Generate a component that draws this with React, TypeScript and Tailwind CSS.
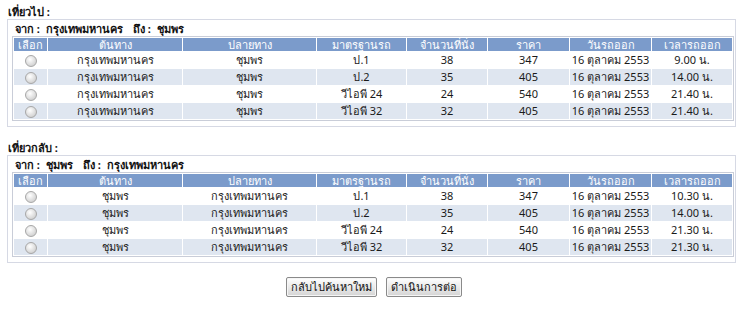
import React from "react";

type Row = { from: string; to: string; std: string; seats: string; price: string; date: string; time: string };

const outbound: Row[] = [
  { from: "กรุงเทพมหานคร", to: "ชุมพร", std: "ป.1", seats: "38", price: "347", date: "16 ตุลาคม 2553", time: "9.00 น." },
  { from: "กรุงเทพมหานคร", to: "ชุมพร", std: "ป.2", seats: "35", price: "405", date: "16 ตุลาคม 2553", time: "14.00 น." },
  { from: "กรุงเทพมหานคร", to: "ชุมพร", std: "วีไอพี 24", seats: "24", price: "540", date: "16 ตุลาคม 2553", time: "21.40 น." },
  { from: "กรุงเทพมหานคร", to: "ชุมพร", std: "วีไอพี 32", seats: "32", price: "405", date: "16 ตุลาคม 2553", time: "21.40 น." },
];

const inbound: Row[] = [
  { from: "ชุมพร", to: "กรุงเทพมหานคร", std: "ป.1", seats: "38", price: "347", date: "16 ตุลาคม 2553", time: "10.30 น." },
  { from: "ชุมพร", to: "กรุงเทพมหานคร", std: "ป.2", seats: "35", price: "405", date: "16 ตุลาคม 2553", time: "14.00 น." },
  { from: "ชุมพร", to: "กรุงเทพมหานคร", std: "วีไอพี 24", seats: "24", price: "540", date: "16 ตุลาคม 2553", time: "21.30 น." },
  { from: "ชุมพร", to: "กรุงเทพมหานคร", std: "วีไอพี 32", seats: "32", price: "405", date: "16 ตุลาคม 2553", time: "21.30 น." },
];

const headers = ["เลือก", "ต้นทาง", "ปลายทาง", "มาตรฐานรถ", "จำนวนที่นั่ง", "ราคา", "วันรถออก", "เวลารถออก"];
const widths = ["w-[33px]", "w-[134px]", "w-[133px]", "w-[89px]", "w-[80px]", "w-[81px]", "w-[81px]", "w-[80px]"];

function Radio() {
  return (
    <span className="inline-block w-[12px] h-[12px] rounded-full border border-[#a7a7a7] bg-[radial-gradient(circle_at_40%_35%,#ffffff_0%,#e4e4e4_45%,#c4c4c4_100%)] align-middle" />
  );
}

function Section({ title, from, to, rows }: { title: string; from: string; to: string; rows: Row[] }) {
  return (
    <div>
      <div className="font-bold text-[#111] pl-[1px] leading-[15px] h-[15px] whitespace-nowrap">{title}</div>
      <div className="border border-[#d6d9e4] px-[4px] pt-[1px] pb-[5px]">
        <div className="font-bold text-[#111] leading-[15px] h-[15px] pl-[3px] whitespace-nowrap">
          จาก : <span className="ml-[3px]">{from}</span>
          <span className="ml-[10px]">ถึง :</span> <span className="ml-[3px]">{to}</span>
        </div>
        <table className="border-separate border-spacing-[1px] border border-[#c9cdd8] w-[720px] table-fixed">
          <thead>
            <tr>
              {headers.map((h, i) => (
                <th key={h} className={`${widths[i]} h-[13px] p-0 leading-[13px] bg-[#7b9bcb] text-white font-normal text-center whitespace-nowrap overflow-hidden`}>
                  {h}
                </th>
              ))}
            </tr>
          </thead>
          <tbody>
            {rows.map((r, i) => {
              const bg = i % 2 === 1 ? "bg-[#dfe6f0]" : "bg-white";
              const cells = [r.from, r.to, r.std, r.seats, r.price, r.date, r.time];
              return (
                <tr key={i}>
                  <td className={`${bg} h-[16px] p-0 text-center leading-[16px]`}>
                    <Radio />
                  </td>
                  {cells.map((c, j) => (
                    <td key={j} className={`${bg} h-[16px] p-0 text-center leading-[16px] text-[#1a1a1a] whitespace-nowrap overflow-hidden`}>
                      {c}
                    </td>
                  ))}
                </tr>
              );
            })}
          </tbody>
        </table>
      </div>
    </div>
  );
}

function Btn({ children }: { children: React.ReactNode }) {
  return (
    <button className="h-[20px] px-[4px] border border-[#8a8a8a] rounded-[2px] bg-[linear-gradient(#ffffff,#e6e6e6_60%,#d4d4d4)] text-[#111] text-[11px] leading-[16px] whitespace-nowrap shadow-[inset_0_0_0_1px_#f6f6f6]">
      {children}
    </button>
  );
}

export default function App() {
  return (
    <div className="w-[746px] h-[321px] bg-white text-[11px] font-['Tahoma','Noto_Sans','DejaVu_Sans',sans-serif]">
      <div className="pl-[7px] pt-[4px] w-[736px]">
        <Section title="เที่ยวไป :" from="กรุงเทพมหานคร" to="ชุมพร" rows={outbound} />
        <div className="h-[13px]" />
        <Section title="เที่ยวกลับ :" from="ชุมพร" to="กรุงเทพมหานคร" rows={inbound} />
      </div>
      <div className="flex justify-center gap-[9px] mt-[14px] pl-[2px]">
        <Btn>กลับไปค้นหาใหม่</Btn>
        <Btn>ดำเนินการต่อ</Btn>
      </div>
    </div>
  );
}
